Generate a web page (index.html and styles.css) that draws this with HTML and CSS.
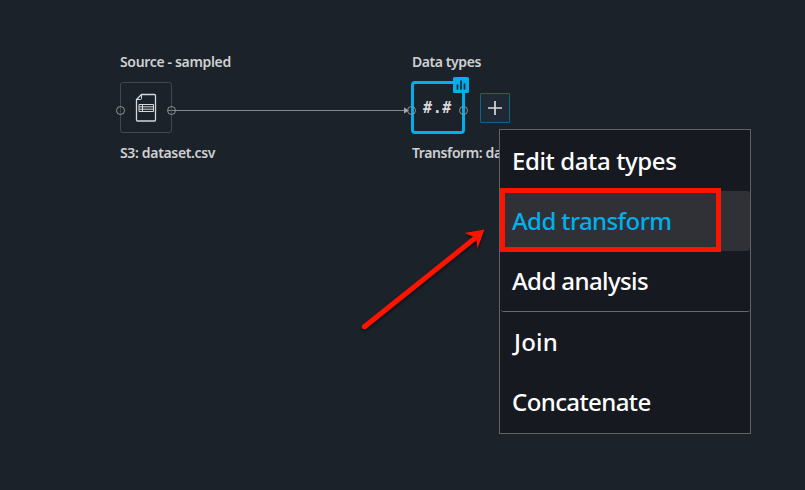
FILE: index.html
```
<!DOCTYPE html>
<html lang="en">
<head>
<meta charset="utf-8">
<title>Data flow</title>
<link rel="stylesheet" href="styles.css">
</head>
<body>
<main class="canvas">
  <svg class="edges" width="805" height="490" viewBox="0 0 805 490">
    <path d="M168 110.500H405" stroke="#808990" fill="none"/>
    <path d="M404 107.500L409 110.500L404 113.500Z" fill="#a4a9ad"/>
  </svg>

  <section class="node source">
    <h2 class="title source-title">Source - sampled</h2>
    <div class="box">
      <svg class="file" width="22" height="30" viewBox="0 0 22 30" fill="none" stroke="#d5d8da" stroke-width="1.300">
        <path d="M6.500 1.500H19.500Q20.500 1.500 20.500 2.500V27Q20.500 28 19.500 28H2.500Q1.500 28 1.500 27V6.500Z"/>
        <path d="M6.500 1.500V5.500Q6.500 6.500 5.500 6.500H1.500" stroke-width="1"/>
        <path d="M4 11.500H18.500V18.500H4ZM4 13.800H18.500M4 16.200H18.500M7.500 11.500V18.500" stroke-width="1"/>
      </svg>
      <i class="port in"></i><i class="port out"></i>
    </div>
    <p class="title source-name">S3: dataset.csv</p>
  </section>

  <section class="node types">
    <h2 class="title types-title">Data types</h2>
    <div class="box selected">
      <span class="hash">#.#</span>
      <i class="port in"></i><i class="port out"></i>
      <svg class="badge" width="16" height="16" viewBox="0 0 16 16">
        <rect width="16" height="16" rx="1.500" fill="#00b0ea"/>
        <path d="M4.500 8V12M8 4V12M11.500 7V12" stroke="#17283a" stroke-width="1.700" stroke-linecap="round"/>
      </svg>
    </div>
    <p class="title types-name">Transform: da</p>
  </section>

  <button class="add" aria-label="Add step">
    <svg width="16" height="16" viewBox="0 0 16 16"><path d="M8 1V15M1 8H15" stroke="#d8dadc" stroke-width="1.700"/></svg>
  </button>

  <nav class="menu">
    <a class="item edit"><span>Edit data types</span></a>
    <a class="item active"><span>Add transform</span></a>
    <a class="item analysis"><span>Add analysis</span></a>
    <a class="item join"><span>Join</span></a>
    <a class="item concat"><span>Concatenate</span></a>
  </nav>
  <div class="highlight"></div>
  <svg class="arrow" width="140" height="120" viewBox="355 220 140 120">
    <path d="M362.400 325.100L473 236.600L464.500 233L484.500 229.500L477.500 248.500L476.500 240.200L365.800 328.900Q363.500 330 362 328Q361.200 326.500 362.400 325.100Z" fill="#fd1400"/>
  </svg>
</main>
</body>
</html>
```
FILE: styles.css
```
* { box-sizing: border-box; }
body {
  margin: 0;
  background: #1b222a;
  font-family: "Noto Sans", "Open Sans", sans-serif;
}
.canvas {
  position: relative;
  width: 805px;
  height: 490px;
  overflow: hidden;
  background: #1b222a;
}
.edges { position: absolute; inset: 0; }
.node { position: absolute; top: 52px; white-space: nowrap; }
.source { left: 120px; }
.types { left: 412px; }
.title {
  margin: 0;
  height: 20px;
  line-height: 20px;
  font-size: 14px;
  font-weight: 600;
  letter-spacing: -0.34px;
  color: #cfd0d2;
}
.types-title { letter-spacing: -0.42px; }
.types-name { letter-spacing: -0.4px; }
.box {
  position: relative;
  display: flex;
  align-items: center;
  justify-content: center;
  width: 52px;
  height: 51px;
  margin: 10px 0;
  border: 1px solid #41474e;
  border-radius: 3px;
}
.selected {
  width: 54px;
  height: 53px;
  margin: 9px 0 9px -1px;
  border: 3px solid #00b0ea;
  border-radius: 4px;
}
.port {
  position: absolute;
  top: 23px;
  width: 9px;
  height: 9px;
  border: 1px solid #929292;
  border-radius: 50%;
}
.in { left: -5px; }
.out { right: -5px; }
.selected .port { top: 22px; }
.selected .in { left: -7px; }
.selected .out { right: -6px; }
.hash {
  margin-left: -1px;
  font: bold 15px/20px "DejaVu Sans Mono", monospace;
  letter-spacing: 0.6px;
  color: #d8d8da;
}
.badge { position: absolute; top: -7px; right: -7px; }
.add {
  position: absolute;
  left: 480px;
  top: 93px;
  display: grid;
  place-items: center;
  width: 30px;
  height: 30px;
  padding: 0;
  border: 1px solid #0c6686;
  border-radius: 1px;
  background: #202834;
}
.menu {
  position: absolute;
  left: 499px;
  top: 129px;
  display: flex;
  flex-direction: column;
  width: 252px;
  height: 305px;
  padding: 1px 0;
  border: 1px solid #616263;
  background: #171920;
}
.item {
  display: flex;
  align-items: center;
  height: 60px;
  padding: 0 0 2px 12px;
  border-radius: 3px;
  font-size: 24px;
  font-weight: 500;
  letter-spacing: -0.6px;
  color: #fff;
  white-space: nowrap;
}
.edit { letter-spacing: -0.38px; }
.active { background: #303136; color: #00b0ea; }
.analysis { height: 61px; margin-left: 1px; padding-left: 11px; border-bottom: 1px solid #68696c; }
.join { padding-left: 14px; letter-spacing: 0.2px; }
.highlight {
  position: absolute;
  left: 500px;
  top: 188px;
  width: 221px;
  height: 64px;
  border: 5px solid #fd1400;
}
.arrow {
  position: absolute;
  left: 355px;
  top: 220px;
  filter: drop-shadow(0 2px 1.500px rgba(0, 0, 0, .55));
}
```
